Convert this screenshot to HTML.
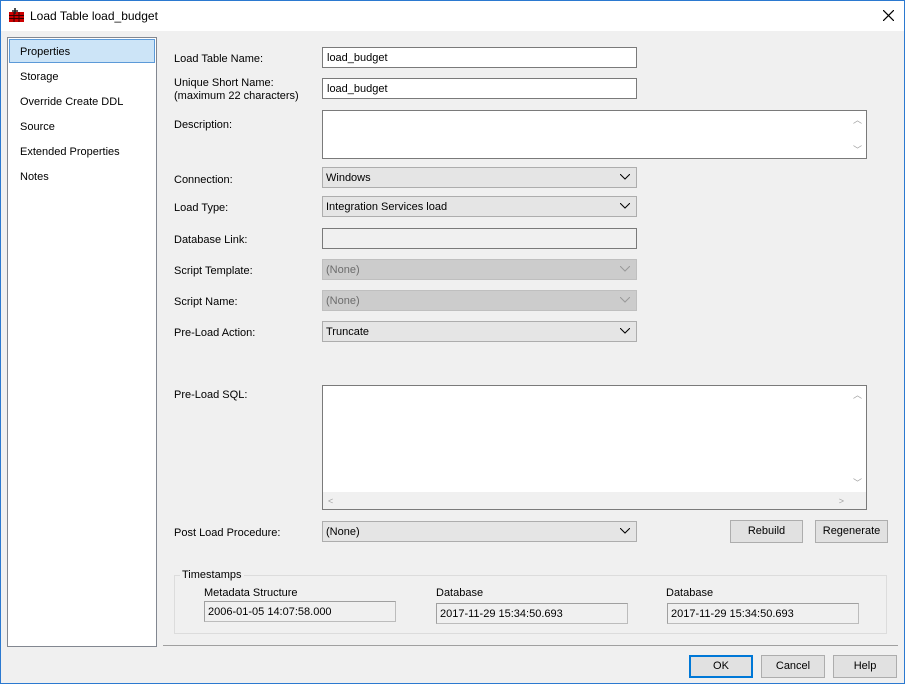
<!DOCTYPE html><html><head><style>
body{margin:0;width:905px;height:684px;background:#f0f0f0;font-family:"Liberation Sans",sans-serif;font-size:11px;color:#000;position:relative;overflow:hidden}
.a{position:absolute}
.in{position:absolute;background:#fff;border:1px solid #7a7a7a;box-sizing:border-box;padding:4px 4px;height:21px}
.dd{position:absolute;background:#e5e5e5;border:1px solid #adadad;box-sizing:border-box;padding:4px 3px;height:21px}
.dd.dis{background:#ccc;border-color:#bfbfbf;color:#6d6d6d}
.dd svg{position:absolute;right:6px;top:6px}
.ro{position:absolute;background:#f0f0f0;border:1px solid #bcbcbc;border-top-color:#a0a0a0;border-left-color:#a0a0a0;box-sizing:border-box;padding:4px 3px;height:21px}
.btn{position:absolute;background:#e1e1e1;border:1px solid #adadad;box-sizing:border-box;text-align:center;line-height:21px;height:23px}
.nav{position:absolute;left:20px}
.sb{position:absolute;color:#a0a0a0;font-size:9px}
</style></head><body>
<div class="a" style="left:0;top:0;width:905px;height:31px;background:#fff"></div>
<div class="a" style="left:0;top:0;width:1px;height:684px;background:#2b79d0"></div>
<div class="a" style="right:0;top:0;width:1px;height:684px;background:#2b79d0"></div>
<div class="a" style="left:0;top:0;width:905px;height:1px;background:#2b79d0"></div>
<div class="a" style="left:0;bottom:0;width:905px;height:1px;background:#2b79d0"></div>
<svg class="a" style="left:9px;top:8px" width="15" height="14"><rect x="0" y="4" width="15" height="10" fill="#c00"/><path d="M0 7.5H15M0 10.5H15M5 4V14M10 4V14" stroke="#300" stroke-width="1"/><path d="M6 0V6M3 3H9" stroke="#222" stroke-width="1.6"/></svg>
<div class="a" style="left:30px;top:9px;font-size:12px">Load Table load_budget</div>
<svg class="a" style="left:883px;top:10px" width="11" height="11"><path d="M0 0L11 11M11 0L0 11" stroke="#000" stroke-width="1.2"/></svg>

<div class="a" style="left:7px;top:37px;width:148px;height:608px;background:#fff;border:1px solid #828790"></div>
<div class="a" style="left:9px;top:39px;width:144px;height:22px;background:#cce4f7;border:1px solid #5c9ad8"></div>
<div class="nav" style="top:46px">Properties</div>
<div class="nav" style="top:71px">Storage</div>
<div class="nav" style="top:96px">Override Create DDL</div>
<div class="nav" style="top:121px">Source</div>
<div class="nav" style="top:146px">Extended Properties</div>
<div class="nav" style="top:171px">Notes</div>

<div class="a" style="left:174px;top:53px">Load Table Name:</div>
<div class="a" style="left:174px;top:77px;line-height:13px">Unique Short Name:<br>(maximum 22 characters)</div>
<div class="a" style="left:174px;top:119px">Description:</div>
<div class="a" style="left:174px;top:174px">Connection:</div>
<div class="a" style="left:174px;top:202px">Load Type:</div>
<div class="a" style="left:174px;top:234px">Database Link:</div>
<div class="a" style="left:174px;top:265px">Script Template:</div>
<div class="a" style="left:174px;top:296px">Script Name:</div>
<div class="a" style="left:174px;top:327px">Pre-Load Action:</div>
<div class="a" style="left:174px;top:389px">Pre-Load SQL:</div>
<div class="a" style="left:174px;top:527px">Post Load Procedure:</div>

<div class="in" style="left:322px;top:47px;width:315px">load_budget</div>
<div class="in" style="left:322px;top:78px;width:315px">load_budget</div>
<div class="in" style="left:322px;top:110px;width:545px;height:49px"><span class="sb" style="right:4px;top:2px">︿</span><span class="sb" style="right:4px;bottom:2px">﹀</span></div>
<div class="dd" style="left:322px;top:167px;width:315px">Windows<svg width="10" height="6"><path d="M0 0L5 5L10 0" fill="none" stroke="#000"/></svg></div>
<div class="dd" style="left:322px;top:196px;width:315px">Integration Services load<svg width="10" height="6"><path d="M0 0L5 5L10 0" fill="none" stroke="#000"/></svg></div>
<div class="in" style="left:322px;top:228px;width:315px;background:#f0f0f0"></div>
<div class="dd dis" style="left:322px;top:259px;width:315px">(None)<svg width="10" height="6"><path d="M0 0L5 5L10 0" fill="none" stroke="#999"/></svg></div>
<div class="dd dis" style="left:322px;top:290px;width:315px">(None)<svg width="10" height="6"><path d="M0 0L5 5L10 0" fill="none" stroke="#999"/></svg></div>
<div class="dd" style="left:322px;top:321px;width:315px">Truncate<svg width="10" height="6"><path d="M0 0L5 5L10 0" fill="none" stroke="#000"/></svg></div>
<div class="in" style="left:322px;top:385px;width:545px;height:125px"><div class="a" style="left:0;right:17px;bottom:0;height:17px;background:#f0f0f0"></div><div class="a" style="right:0;bottom:0;width:17px;height:17px;background:#f0f0f0"></div><span class="sb" style="right:4px;top:2px">︿</span><span class="sb" style="right:4px;bottom:20px">﹀</span><span class="sb" style="left:5px;bottom:3px">&lt;</span><span class="sb" style="right:22px;bottom:3px">&gt;</span></div>
<div class="dd" style="left:322px;top:521px;width:315px">(None)<svg width="10" height="6"><path d="M0 0L5 5L10 0" fill="none" stroke="#000"/></svg></div>
<div class="btn" style="left:730px;top:520px;width:73px">Rebuild</div>
<div class="btn" style="left:815px;top:520px;width:73px">Regenerate</div>

<div class="a" style="left:174px;top:575px;width:711px;height:57px;border:1px solid #dcdcdc"></div>
<div class="a" style="left:180px;top:569px;background:#f0f0f0;padding:0 2px">Timestamps</div>
<div class="a" style="left:204px;top:587px">Metadata Structure</div>
<div class="a" style="left:436px;top:587px">Database</div>
<div class="a" style="left:666px;top:587px">Database</div>
<div class="ro" style="left:204px;top:601px;width:192px">2006-01-05 14:07:58.000</div>
<div class="ro" style="left:436px;top:603px;width:192px">2017-11-29 15:34:50.693</div>
<div class="ro" style="left:667px;top:603px;width:192px">2017-11-29 15:34:50.693</div>

<div class="a" style="left:163px;top:645px;width:735px;height:1px;background:#a0a0a0"></div>
<div class="btn" style="left:689px;top:655px;width:64px;border:2px solid #0078d7;line-height:19px">OK</div>
<div class="btn" style="left:761px;top:655px;width:64px">Cancel</div>
<div class="btn" style="left:833px;top:655px;width:64px">Help</div>
</body></html>
